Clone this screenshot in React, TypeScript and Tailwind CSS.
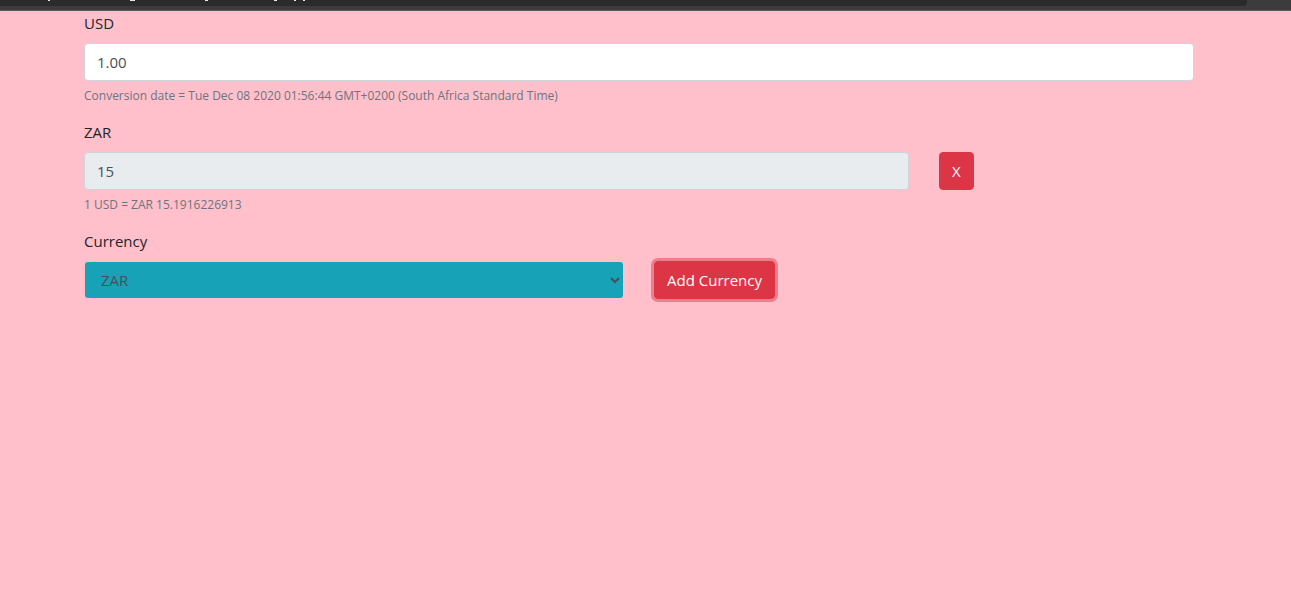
import { useState } from "react";

const field =
  "block h-[38px] w-full rounded border border-[#ced4da] px-3 text-[15px] leading-6 text-[#495057] outline-none";
const label = "mb-2 block text-[15px] leading-6";
const hint = "mt-1.5 block text-[12px] leading-[17px] text-[#6c757d]";
const button =
  "h-[38px] rounded border border-[#dc3545] bg-[#dc3545] px-3 text-[15px] leading-6 text-white outline-none";

function AddressBar() {
  return (
    <div className="h-[11px] border-b border-[#5c5c5c] bg-[#3c3c3c] pr-11">
      <div className="h-[6px] rounded-br bg-[#2b2b2b]">
        <svg className="block h-[2px] w-[320px]" viewBox="0 0 320 2" fill="#e8eaed" aria-hidden="true">
          <path d="M48 0h2v1h-2zM130 0h5v1h-5zM205 0h3v1h-3zM274 0h3v1h-3zM294 0h2v1h-2zM303 0h2v1h-2z" />
        </svg>
      </div>
    </div>
  );
}

export default function App() {
  const [amount, setAmount] = useState("1.00");
  const [currency, setCurrency] = useState("ZAR");

  return (
    <div className="min-h-screen bg-[#ffc0cb] font-['Open_Sans','Noto_Sans',sans-serif] text-[#212529]">
      <AddressBar />
      <main className="pr-[13px]">
        <div className="mx-auto flex max-w-[1140px] flex-col gap-4">
          <div className="px-[15px]">
            <label className={label} htmlFor="usd">USD</label>
            <input
              id="usd"
              className={`${field} bg-white`}
              value={amount}
              onChange={(e) => setAmount(e.target.value)}
            />
            <small className={hint}>
              Conversion date = Tue Dec 08 2020 01:56:44 GMT+0200 (South Africa Standard Time)
            </small>
          </div>

          <div className="px-[15px]">
            <label className={label} htmlFor="zar">ZAR</label>
            <div className="-mx-[15px] flex">
              <div className="w-3/4 px-[15px]">
                <input id="zar" className={`${field} bg-[#e9ecef]`} value="15" readOnly />
              </div>
              <div className="px-[15px]">
                <button type="button" className={button}>X</button>
              </div>
            </div>
            <small className={hint}>1 USD = ZAR 15.1916226913</small>
          </div>

          <div className="px-[15px]">
            <label className={label} htmlFor="currency">Currency</label>
            <div className="-mx-[15px] flex">
              <div className="w-1/2 px-[15px]">
                <select
                  id="currency"
                  className="block h-[38px] w-full rounded border border-transparent bg-[#17a2b8] bg-clip-padding px-3 text-[15px] leading-6 text-[#495057] outline-none"
                  value={currency}
                  onChange={(e) => setCurrency(e.target.value)}
                >
                  <option>ZAR</option>
                  <option>USD</option>
                </select>
              </div>
              <div className="px-[15px]">
                <button type="button" className={`${button} ring-3 ring-[#e15361]/60`}>
                  Add Currency
                </button>
              </div>
            </div>
          </div>
        </div>
      </main>
    </div>
  );
}
